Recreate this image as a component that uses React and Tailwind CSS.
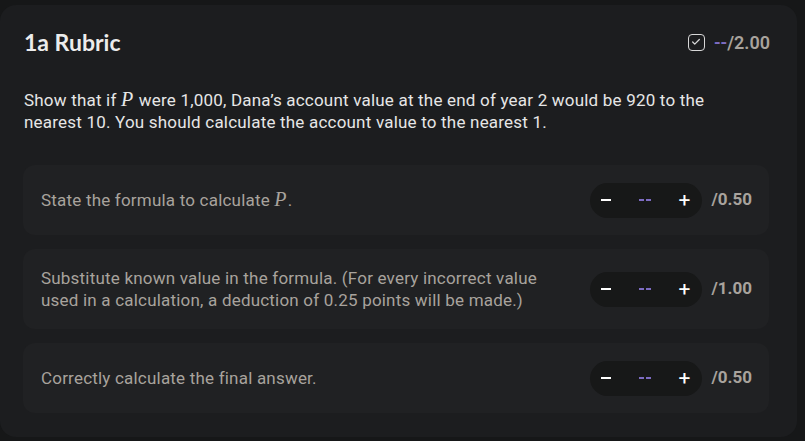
import { Check } from "lucide-react";

const CRITERIA = [
  { text: <>State the formula to calculate <Var>P</Var>.</>, max: "0.50" },
  {
    text: "Substitute known value in the formula. (For every incorrect value used in a calculation, a deduction of 0.25 points will be made.)",
    max: "1.00",
  },
  { text: "Correctly calculate the final answer.", max: "0.50" },
];

function Var({ children }) {
  return (
    <span className="inline-block font-['Liberation_Serif',serif] italic text-[20px] leading-none pr-[1px]">{children}</span>
  );
}

function Stepper() {
  return (
    <div className="flex items-center justify-between w-[112px] h-[35px] rounded-full bg-[#171818] pl-[11px] pr-[12px] shrink-0">
      <span className="block w-[10px] h-[2px] bg-white" />
      <span className="flex gap-[2px]">
        <span className="block w-[5px] h-[2px] bg-[#7d6cc2]" />
        <span className="block w-[5px] h-[2px] bg-[#7d6cc2]" />
      </span>
      <span className="text-white text-[21px] leading-none">+</span>
    </div>
  );
}

export default function App() {
  return (
    <div className="w-[805px] h-[441px] bg-[#161718] pt-[5px] font-['Roboto',sans-serif] overflow-hidden">
      <div className="w-[797px] h-[432px] bg-[#1c1d1f] rounded-[16px] px-[24px] pt-[23px]">
        {/* Header */}
        <div className="flex items-center justify-between h-[28px] pr-[3px]">
          <h2 className="font-['Lato',sans-serif] font-bold text-[23px] text-[#ececec] leading-[28px]">1a Rubric</h2>
          <div className="flex items-center gap-[9px]">
            <div className="w-[17px] h-[17px] rounded-[4px] border-[1.5px] border-[#d8d8d8] flex items-center justify-center">
              <Check size={10} strokeWidth={3} className="text-[#d8d8d8]" />
            </div>
            <span className="text-[18px] font-semibold text-[#a8a39d]">
              <span className="text-[#7d6cc2]">--</span>/2.00
            </span>
          </div>
        </div>

        {/* Question */}
        <p className="mt-[33px] text-[17px] tracking-[0.2px] leading-[22px] text-[#e6e6e6] max-w-[720px]">
          Show that if <Var>P</Var> were 1,000, Dana’s account value at the end of year 2 would be 920 to the nearest 10. You should calculate the account value to the nearest 1.
        </p>

        {/* Criteria */}
        <div className="mt-[32px] mr-[4px] -ml-[1px] flex flex-col gap-[14px]">
          {CRITERIA.map((c, i) => (
            <div key={i} className={`flex items-center justify-between rounded-[12px] bg-[#202123] pl-[18px] pr-[17px] ${i === 1 ? "h-[80px]" : "h-[70px]"}`}>
              <p className="text-[17px] tracking-[0.2px] leading-[22px] text-[#a8a39d] max-w-[525px]">{c.text}</p>
              <div className="flex items-center gap-[9px]">
                <Stepper />
                <span className="text-[17px] font-bold text-[#a8a39d]">/{c.max}</span>
              </div>
            </div>
          ))}
        </div>
      </div>
    </div>
  );
}
